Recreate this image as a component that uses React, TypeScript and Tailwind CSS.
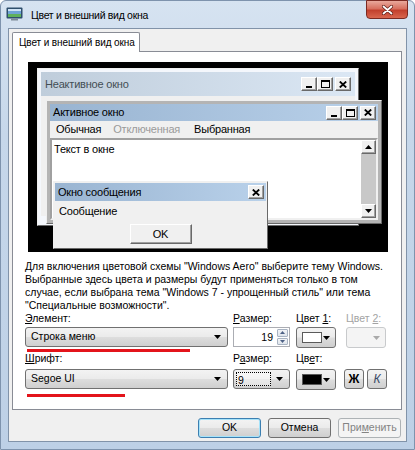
import React from 'react';

const win7Face =
  'bg-[linear-gradient(180deg,#f3f3f3_0%,#ebebeb_48%,#dddddd_52%,#cfcfcf_100%)]';
const raised =
  'border border-t-white border-l-white border-r-[#696969] border-b-[#696969] shadow-[inset_-1px_-1px_0_#a0a0a0]';

function Arrow({ dir = 'down', color = '#000', size = 7 }: { dir?: 'up' | 'down'; color?: string; size?: number }) {
  const h = Math.ceil(size / 2);
  return (
    <svg width={size} height={h} viewBox={`0 0 ${size} ${h}`} className="block">
      <path
        d={dir === 'down' ? `M0 0H${size}L${size / 2} ${h}Z` : `M0 ${h}H${size}L${size / 2} 0Z`}
        fill={color}
      />
    </svg>
  );
}

function Cap({ children, className = '' }: { children: React.ReactNode; className?: string }) {
  return (
    <div className={`w-[16px] h-[14px] bg-[#f0f0f0] ${raised} flex items-center justify-center ${className}`}>
      {children}
    </div>
  );
}

function CloseGlyph() {
  return (
    <svg width="8" height="7" viewBox="0 0 8 7">
      <path d="M0.8 0.5L7.2 6.5M7.2 0.5L0.8 6.5" stroke="#000" strokeWidth="1.8" />
    </svg>
  );
}

function CaptionButtons({ full = true }: { full?: boolean }) {
  return (
    <div className="flex items-center">
      {full && (
        <>
          <Cap>
            <div className="w-[6px] h-[2px] bg-black mt-[6px]" />
          </Cap>
          <Cap>
            <div className="w-[9px] h-[8px] border border-black border-t-2" />
          </Cap>
        </>
      )}
      <Cap className={full ? 'ml-[2px]' : ''}>
        <CloseGlyph />
      </Cap>
    </div>
  );
}

// Preview of window colours (windows placed on a small desktop)
function Preview() {
  return (
    <div className="ml-[15px] mt-[10px] w-[360px] h-[190px] bg-black relative overflow-hidden text-[11px] tracking-[-0.2px]">
      {/* inactive window */}
      <div className="absolute left-[9px] top-[6px] w-[322px] h-[158px] bg-[#f4f7fc] border border-t-[#f0f0f0] border-l-[#f0f0f0] border-r-[#696969] border-b-[#696969] p-[3px]">
        <div className="h-[24px] flex items-center pl-[4px] pr-[4px] bg-[linear-gradient(90deg,#bfcddb,#dbe7f4)]">
          <span className="text-[#434e54]">Неактивное окно</span>
          <div className="ml-auto">
            <CaptionButtons />
          </div>
        </div>
        <div className="h-[120px] bg-[#f0f0f0]" />
      </div>

      {/* active window */}
      <div className="absolute left-[18px] top-[38px] w-[336px] h-[124px] bg-[#b4b4b4] border border-t-[#f0f0f0] border-l-[#f0f0f0] border-r-[#696969] border-b-[#696969] p-[3px] flex flex-col">
        <div className="h-[17px] flex items-center pl-[3px] pr-[2px] bg-[linear-gradient(90deg,#99b4d1,#b9d1ea)]">
          <span className="text-black">Активное окно</span>
          <div className="ml-auto">
            <CaptionButtons />
          </div>
        </div>
        <div className="h-[17px] bg-[#f0f0f0] flex items-center pl-[6px]">
          <span>Обычная</span>
          <span className="ml-[12px] text-[#9a9a9a]">Отключенная</span>
          <span className="ml-[14px]">Выбранная</span>
        </div>
        <div className="flex-1 bg-white border-2 border-t-[#a0a0a0] border-l-[#a0a0a0] border-r-[#f0f0f0] border-b-[#f0f0f0] flex">
          <div className="flex-1 pl-[2px] pt-[2px] leading-[14px]">Текст в окне</div>
          <div className="w-[15px] bg-[#c8c8c8] flex flex-col justify-between">
            <div className={`h-[14px] bg-[#f0f0f0] ${raised} flex items-center justify-center`}>
              <Arrow dir="up" size={7} />
            </div>
            <div className={`h-[14px] bg-[#f0f0f0] ${raised} flex items-center justify-center`}>
              <Arrow dir="down" size={7} />
            </div>
          </div>
        </div>
      </div>

      {/* message box */}
      <div className="absolute left-[25px] top-[119px] w-[215px] h-[68px] bg-[#f0f0f0] border border-t-[#f0f0f0] border-l-[#f0f0f0] border-r-[#696969] border-b-[#696969] p-[1px] flex flex-col">
        <div className="h-[18px] flex items-center pl-[3px] pr-[2px] bg-[linear-gradient(90deg,#99b4d1,#b9d1ea)]">
          <span className="text-black">Окно сообщения</span>
          <div className="ml-auto">
            <CaptionButtons full={false} />
          </div>
        </div>
        <div className="pl-[4px] pt-[3px] leading-[14px]">Сообщение</div>
        <div className="flex justify-center mt-[6px]">
          <div className={`w-[62px] h-[20px] bg-[#f0f0f0] ${raised} flex items-center justify-center`}>
            OK
          </div>
        </div>
      </div>
    </div>
  );
}

function Combo({ text, w }: { text: string; w: string }) {
  return (
    <div className={`${w} h-[20px] ${win7Face} border border-[#707070] rounded-[3px] flex items-center pl-[5px] pr-[6px]`}>
      <span>{text}</span>
      <div className="ml-auto">
        <Arrow size={7} />
      </div>
    </div>
  );
}

function ColorBtn({ swatch, disabled = false }: { swatch?: string; disabled?: boolean }) {
  return (
    <div
      className={`w-[40px] h-[21px] rounded-[3px] border flex items-center pl-[5px] pr-[5px] ${
        disabled ? 'border-[#c8cacc] bg-[#f4f4f4]' : `border-[#707070] ${win7Face}`
      }`}
    >
      {swatch && <div className={`w-[20px] h-[11px] border border-[#5a5a5a] ${swatch}`} />}
      <div className="ml-auto">
        <Arrow size={7} color={disabled ? '#a9a9a9' : '#000'} />
      </div>
    </div>
  );
}

function Label({ children, muted = false }: { children: React.ReactNode; muted?: boolean }) {
  return <div className={`h-[13px] leading-[13px] ${muted ? 'text-[#a3a3a3]' : 'text-black'}`}>{children}</div>;
}

function Controls() {
  return (
    <div className="ml-[12px] flex flex-col">
      {/* row 1 */}
      <div className="flex items-start">
        <div className="w-[203px] flex flex-col">
          <Label>
            <u>Э</u>лемент:
          </Label>
          <div className="mt-[2px]">
            <Combo text="Строка меню" w="w-[203px]" />
          </div>
          <div className="mt-[2px] ml-[2px] w-[163px] h-[3px] bg-[#e3141b]" />
        </div>
        <div className="ml-[5px] w-[57px] flex flex-col">
          <Label>
            <u>Р</u>азмер:
          </Label>
          <div className="mt-[2px] h-[20px] border border-[#abadb3] bg-white flex">
            <div className="flex-1 text-right pr-[3px] leading-[18px]">19</div>
            <div className="w-[13px] flex flex-col gap-[1px] p-[1px]">
              <div className="flex-1 border border-[#a8b3c2] rounded-[1px] bg-[linear-gradient(#f2f4f7,#dfe5ec)] flex items-center justify-center">
                <Arrow dir="up" size={5} color="#4d6185" />
              </div>
              <div className="flex-1 border border-[#a8b3c2] rounded-[1px] bg-[linear-gradient(#f2f4f7,#dfe5ec)] flex items-center justify-center">
                <Arrow dir="down" size={5} color="#4d6185" />
              </div>
            </div>
          </div>
        </div>
        <div className="ml-[6px] w-[40px] flex flex-col">
          <Label>
            Цвет <u>1</u>:
          </Label>
          <div className="mt-[2px]">
            <ColorBtn swatch="bg-white" />
          </div>
        </div>
        <div className="ml-[10px] w-[40px] flex flex-col">
          <Label muted>
            Цвет <u>2</u>:
          </Label>
          <div className="mt-[2px]">
            <ColorBtn disabled />
          </div>
        </div>
      </div>

      {/* row 2 */}
      <div className="flex items-start">
        <div className="w-[203px] flex flex-col">
          <Label>
            <u>Ш</u>рифт:
          </Label>
          <div className="mt-[4px]">
            <Combo text="Segoe UI" w="w-[203px]" />
          </div>
          <div className="mt-[5px] ml-[2px] w-[98px] h-[3px] bg-[#e3141b]" />
        </div>
        <div className="ml-[5px] w-[57px] flex flex-col">
          <Label>
            Р<u>а</u>змер:
          </Label>
          <div className={`mt-[4px] h-[20px] rounded-[3px] border border-[#707070] ${win7Face} flex items-center p-[2px]`}>
            <div className="flex-1 h-full border border-dotted border-black bg-white/40 leading-[14px] pl-[1px]">9</div>
            <div className="w-[16px] flex justify-center">
              <Arrow size={7} />
            </div>
          </div>
        </div>
        <div className="ml-[6px] w-[40px] flex flex-col">
          <Label>
            Цв<u>е</u>т:
          </Label>
          <div className="mt-[4px]">
            <ColorBtn swatch="bg-black" />
          </div>
        </div>
        <div className="ml-[8px] flex items-center gap-[3px] mt-[17px]">
          <div className={`w-[20px] h-[20px] rounded-[3px] border border-[#707070] ${win7Face} flex items-center justify-center text-[12px] font-bold`}>
            Ж
          </div>
          <div className={`w-[20px] h-[20px] rounded-[3px] border border-[#707070] ${win7Face} flex items-center justify-center text-[12px] italic text-[#3a4a66]`}>
            К
          </div>
        </div>
      </div>
    </div>
  );
}

function DialogButton({ children, kind = 'normal' }: { children: React.ReactNode; kind?: 'default' | 'normal' | 'disabled' }) {
  const look =
    kind === 'disabled'
      ? 'border-[#adb2b5] bg-[#f4f4f4] text-[#838383]'
      : kind === 'default'
      ? `border-[#3c7fb1] ${win7Face} shadow-[inset_0_0_0_1px_#a6e3fa] text-black`
      : `border-[#707070] ${win7Face} text-black`;
  return (
    <div className={`w-[63px] h-[20px] rounded-[3px] border flex items-center justify-center ${look}`}>
      {children}
    </div>
  );
}

function AppIcon() {
  return (
    <svg width="17" height="15" viewBox="0 0 17 15">
      <rect x="0.5" y="1.5" width="16" height="11" rx="1" fill="#2f4f6d" />
      <rect x="2" y="3" width="13" height="8" fill="#6fa3d4" />
      <rect x="2" y="3" width="13" height="2" fill="#cfe3f5" />
      <rect x="2" y="8" width="13" height="3" fill="#5fb05a" />
      <rect x="5" y="12.5" width="7" height="2" fill="#7d8a96" />
    </svg>
  );
}

export default function App() {
  return (
    <div className="w-[415px] h-[450px] font-['Liberation_Sans',Arial,sans-serif] text-[10.5px] text-black overflow-hidden whitespace-nowrap">
      <div className="w-full h-full flex flex-col rounded-t-[6px] border border-[#7e93ad] bg-[linear-gradient(180deg,#d6e3f1_0%,#c6d7ea_30%,#bdd0e6_100%)]">
        {/* title bar */}
        <div className="h-[27px] flex items-start">
          <div className="ml-[5px] mt-[5px]">
            <AppIcon />
          </div>
          <div className="ml-[8px] mt-[6px] text-[10.5px] tracking-[-0.3px] leading-[16px] text-black">Цвет и внешний вид окна</div>
          <div className="ml-auto mr-[6px] -mt-px w-[42px] h-[19px] rounded-b-[4px] border border-[#7b2a22] bg-[linear-gradient(180deg,#e9a99c_0%,#d7705f_45%,#c2402d_55%,#d9664e_100%)] flex items-center justify-center">
            <svg width="11" height="10" viewBox="0 0 11 10">
              <path d="M1.5 1.5L9.5 8.5M9.5 1.5L1.5 8.5" stroke="#5b1d16" strokeWidth="3.2" strokeLinecap="round" />
              <path d="M1.5 1.5L9.5 8.5M9.5 1.5L1.5 8.5" stroke="#ffffff" strokeWidth="1.8" strokeLinecap="round" />
            </svg>
          </div>
        </div>

        {/* client area */}
        <div className="mx-[7px] mb-[7px] flex-1 bg-[#f0f0f0] border border-[#8193a9] flex flex-col">
          <div className="pl-[3px] pt-[3px] flex">
            <div className="w-[128px] h-[20px] bg-white border border-[#898c95] border-b-0 rounded-t-[2px] -mb-px relative z-10 flex items-center pl-[6px] text-[10px] tracking-[-0.1px]">
              Цвет и внешний вид окна
            </div>
          </div>
          <div className="ml-[3px] w-[390px] h-[359px] bg-white border border-[#898c95] flex flex-col">
            <Preview />
            <div className="ml-[12px] mt-[8px] leading-[13px]">
              Для включения цветовой схемы "Windows Aero" выберите тему Windows.
              <br />
              Выбранные здесь цвета и размеры будут применяться только в том
              <br />
              случае, если выбрана тема "Windows 7 - упрощенный стиль" или тема
              <br />
              "Специальные возможности".
            </div>
            <Controls />
          </div>
          <div className="mt-[8px] mr-[5px] flex justify-end gap-[7px]">
            <DialogButton kind="default">OK</DialogButton>
            <DialogButton>Отмена</DialogButton>
            <DialogButton kind="disabled">
              При<u>м</u>енить
            </DialogButton>
          </div>
        </div>
      </div>
    </div>
  );
}
